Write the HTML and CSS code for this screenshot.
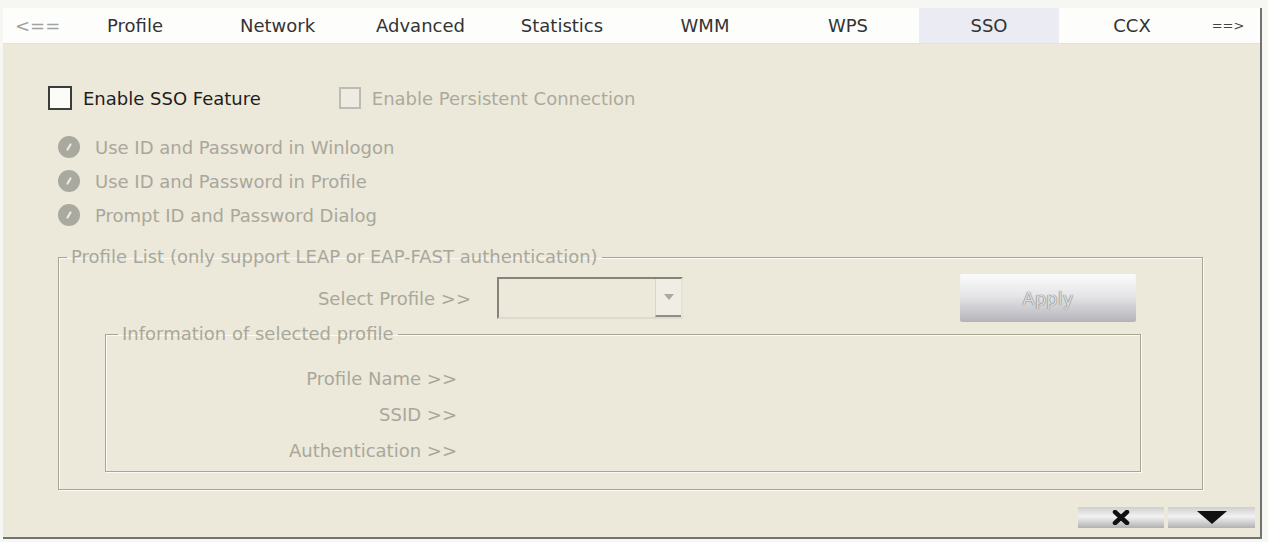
FILE: index.html
```html
<!DOCTYPE html>
<html lang="en">
<head>
    <meta charset="UTF-8">
    <meta name="viewport" content="width=device-width, initial-scale=1.0">
    <title>SSO Settings</title>
    <link rel="stylesheet" href="styles.css">
</head>
<body>

<div class="window">
    <div class="tabs">
        <div class="tab arrow-left">&lt;==</div>
        <div class="tab tab-profile">Profile</div>
        <div class="tab tab-network">Network</div>
        <div class="tab tab-advanced">Advanced</div>
        <div class="tab tab-statistics">Statistics</div>
        <div class="tab tab-wmm">WMM</div>
        <div class="tab tab-wps">WPS</div>
        <div class="tab tab-sso active">SSO</div>
        <div class="tab tab-ccx">CCX</div>
        <div class="tab arrow-right">==&gt;</div>
    </div>

    <div class="panel">
        <div class="check-row">
            <label class="check">
                <span class="box"></span>
                Enable SSO Feature
            </label>
            <label class="check disabled">
                <span class="box"></span>
                Enable Persistent Connection
            </label>
        </div>

        <!-- Login source options (disabled until SSO is on) -->
        <div class="radios">
            <div class="radio">
                <svg width="22" height="22" viewBox="0 0 22 22"><circle cx="11" cy="11" r="11" fill="#aaa99f"/><path d="M9.5 13.5 L12.5 8.5" stroke="#ecebe3" stroke-width="2.2" stroke-linecap="round"/></svg>
                Use ID and Password in Winlogon
            </div>
            <div class="radio">
                <svg width="22" height="22" viewBox="0 0 22 22"><circle cx="11" cy="11" r="11" fill="#aaa99f"/><path d="M9.5 13.5 L12.5 8.5" stroke="#ecebe3" stroke-width="2.2" stroke-linecap="round"/></svg>
                Use ID and Password in Profile
            </div>
            <div class="radio">
                <svg width="22" height="22" viewBox="0 0 22 22"><circle cx="11" cy="11" r="11" fill="#aaa99f"/><path d="M9.5 13.5 L12.5 8.5" stroke="#ecebe3" stroke-width="2.2" stroke-linecap="round"/></svg>
                Prompt ID and Password Dialog
            </div>
        </div>

        <fieldset class="group outer">
            <legend>Profile List (only support LEAP or EAP-FAST authentication)</legend>

            <div class="select-row">
                <span class="select-label">Select Profile &gt;&gt;</span>
                <div class="combo">
                    <span class="combo-btn">
                        <svg width="10" height="6" viewBox="0 0 10 6"><path d="M0 0 H10 L5 6 Z" fill="#a9a9a3"/></svg>
                    </span>
                </div>
                <button class="apply" disabled>Apply</button>
            </div>

            <fieldset class="group inner">
                <legend>Information of selected profile</legend>
                <div class="info-row"><span class="info-label">Profile Name &gt;&gt;</span></div>
                <div class="info-row"><span class="info-label">SSID &gt;&gt;</span></div>
                <div class="info-row"><span class="info-label">Authentication &gt;&gt;</span></div>
            </fieldset>
        </fieldset>

        <div class="bottom-bar">
            <button class="mini-btn">
                <svg width="18" height="15" viewBox="0 0 18 15"><path d="M3 2 L15 13 M15 2 L3 13" stroke="#111" stroke-width="4.5" stroke-linecap="round"/></svg>
            </button>
            <button class="mini-btn">
                <svg width="30" height="13" viewBox="0 0 30 13"><path d="M0 0 H30 L15 13 Z" fill="#111"/></svg>
            </button>
        </div>
    </div>
</div>

</body>
</html>
```

FILE: styles.css
```css
body {
    margin: 0;
    padding: 0;
    width: 1268px;
    height: 542px;
    background-color: #f6f6f3;
    font-family: "DejaVu Sans", Verdana, sans-serif;
    font-size: 18px;
    overflow: hidden;
}

.window {
    margin: 8px 0 0 3px;
    width: 1257px;
    border-right: 2px solid #727270;
    border-bottom: 2px solid #727270;
}

/* Tab strip */
.tabs {
    display: flex;
    height: 35px;
    background-color: #fdfdfc;
    border-bottom: 1px solid #e2e1da;
}

.tab {
    height: 35px;
    line-height: 35px;
    text-align: center;
    color: #333;
    box-sizing: border-box;
}

.arrow-left {
    width: 82px;
    text-align: left;
    padding-left: 12px;
    color: #a2a2a0;
}

.tab-profile { width: 120px; padding-right: 20px; }
.tab-network { width: 145px; }
.tab-advanced { width: 141px; }
.tab-statistics { width: 142px; }
.tab-wmm { width: 144px; }
.tab-wps { width: 142px; }
.tab-sso { width: 140px; }
.tab-ccx { width: 120px; padding-left: 26px; }

.arrow-right {
    flex: 1;
    padding-left: 17px;
    font-size: 13px;
    color: #444;
}

.tab.active {
    background-color: #ebebf4;
}

/* Main panel */
.panel {
    height: 493px;
    box-sizing: border-box;
    padding: 42px 0 0 45px;
    background-color: #ece9da;
    color: #a9a79b;
}

.check-row {
    display: flex;
    align-items: center;
    height: 24px;
}

.check {
    display: flex;
    align-items: center;
    gap: 11px;
    color: #1e1e1e;
}

.check .box {
    width: 24px;
    height: 24px;
    box-sizing: border-box;
    border: 2px solid #3c3c3a;
    background-color: #fbfbf8;
}

.check.disabled {
    margin-left: 78px;
    color: #aba99d;
}

.check.disabled .box {
    width: 22px;
    height: 22px;
    border-color: #bdbcb2;
    background-color: #eeece2;
}

.radios {
    margin-top: 20px;
    padding-left: 10px;
}

.radio {
    display: flex;
    align-items: center;
    gap: 15px;
    height: 34px;
}

/* Group boxes */
.group {
    margin: 0;
    padding: 0;
    min-width: 0;
    box-sizing: border-box;
    border: 1px solid #a6a597;
    box-shadow: 1px 1px 0 #fbfaf4, inset 1px 1px 0 #fbfaf4;
}

.group legend {
    padding: 0 4px;
    line-height: 22px;
    color: #a9a79b;
}

.outer {
    margin: 14px 0 0 10px;
    width: 1145px;
    padding: 6px 0 17px 0;
}

.outer > legend {
    margin-left: 8px;
}

.select-row {
    display: flex;
    align-items: center;
    height: 48px;
}

.select-label {
    width: 412px;
    text-align: right;
}

.combo {
    margin-left: 26px;
    width: 186px;
    height: 42px;
    box-sizing: border-box;
    border: 2px solid;
    border-color: #85847b #e4e3da #dcdbd2 #85847b;
    display: flex;
    justify-content: flex-end;
}

.combo-btn {
    width: 25px;
    display: flex;
    align-items: center;
    justify-content: center;
    border-left: 1px solid #d8d7ce;
    border-bottom: 2px solid #8f8e86;
    background-color: #efede4;
}

.apply {
    margin-left: 277px;
    width: 176px;
    height: 48px;
    border: none;
    border-radius: 2px;
    background: linear-gradient(#fbfbfb, #e6e6e8 45%, #b3b3ba);
    font-family: inherit;
    font-size: 18px;
    color: #dcdcdc;
    text-shadow: 0 0 1px #6e6e6e, 0 0 1px #8a8a8a;
}

.inner {
    margin: 1px 0 0 46px;
    width: 1036px;
    padding: 15px 0 3px 0;
}

.inner > legend {
    margin-left: 12px;
}

.info-row {
    height: 36px;
    display: flex;
    align-items: center;
}

.info-label {
    width: 351px;
    text-align: right;
}

/* Bottom mini buttons */
.bottom-bar {
    display: flex;
    justify-content: flex-end;
    gap: 4px;
    margin-top: 17px;
    padding-right: 5px;
}

.mini-btn {
    width: 86px;
    height: 21px;
    padding: 0;
    border: none;
    display: flex;
    align-items: center;
    justify-content: center;
    background: linear-gradient(#cfcfd0, #f2f2f2 45%, #b1b1b5);
}

.mini-btn + .mini-btn {
    width: 87px;
}
```
